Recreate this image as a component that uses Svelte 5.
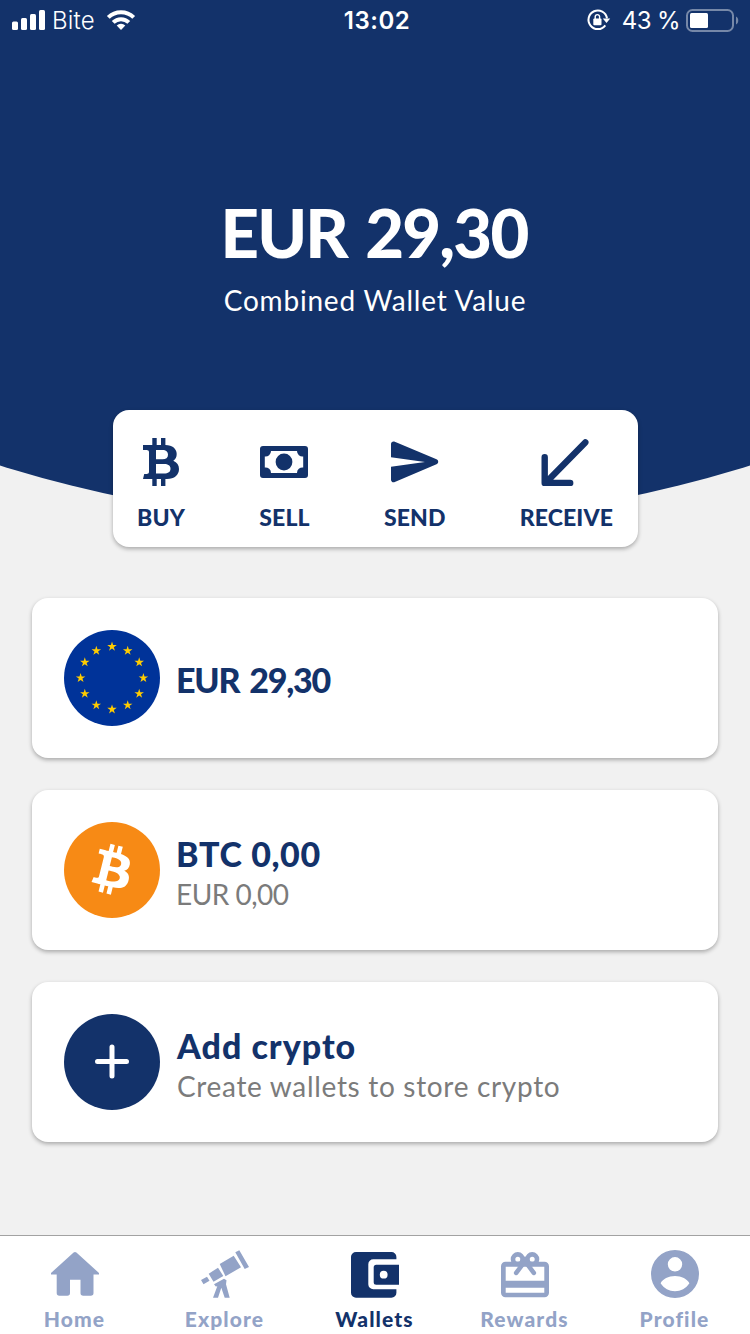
<script>
  const actions = [
    { id: 'buy', label: 'BUY' },
    { id: 'sell', label: 'SELL' },
    { id: 'send', label: 'SEND' },
    { id: 'receive', label: 'RECEIVE' },
  ];

  const wallets = [
    { id: 'eur', title: 'EUR 29,30', subtitle: '' },
    { id: 'btc', title: 'BTC 0,00', subtitle: 'EUR 0,00' },
    { id: 'add', title: 'Add crypto', subtitle: 'Create wallets to store crypto' },
  ];

  const tabs = [
    { id: 'home', label: 'Home' },
    { id: 'explore', label: 'Explore' },
    { id: 'wallets', label: 'Wallets' },
    { id: 'rewards', label: 'Rewards' },
    { id: 'profile', label: 'Profile' },
  ];

  let activeTab = 'wallets';

  const starAngles = Array.from({ length: 12 }, (_, i) => (i * Math.PI) / 6);
</script>

<div class="screen">
  <header class="hero">
    <div class="status-bar">
      <div class="status-left">
        <svg width="34" height="20" viewBox="0 0 34 20" fill="#fff">
          <rect x="0" y="11.5" width="6" height="8.5" rx="1.5" />
          <rect x="9" y="8" width="6" height="12" rx="1.5" />
          <rect x="18" y="4" width="6" height="16" rx="1.5" />
          <rect x="27" y="0" width="6" height="20" rx="1.5" />
        </svg>
        <span class="carrier">Bite</span>
        <svg width="28" height="20" viewBox="0 0 28 20">
          <g fill="none" stroke="#fff" stroke-width="4">
            <path d="M1.3 7.4a18 18 0 0 1 25.4 0" />
            <path d="M6.2 12.4a11 11 0 0 1 15.6 0" />
          </g>
          <path d="M14 20l-4.3-4.4a6.2 6.2 0 0 1 8.6 0z" fill="#fff" />
        </svg>
      </div>
      <span class="time">13:02</span>
      <div class="status-right">
        <svg width="24" height="22" viewBox="0 0 24 22">
          <path d="M18.3 16.3A9.3 9.3 0 1 1 20 9.4" fill="none" stroke="#fff" stroke-width="2" />
          <path d="M15.8 9.6h7.4l-3.7 4.4z" fill="#fff" />
          <rect x="6.3" y="9.6" width="8.2" height="6.6" rx="1" fill="#fff" />
          <path d="M8.2 10V7.8a2.2 2.2 0 0 1 4.4 0V10" fill="none" stroke="#fff" stroke-width="1.4" />
        </svg>
        <span class="percent">43 %</span>
        <svg width="53" height="23" viewBox="0 0 53 23">
          <rect x="1" y="1" width="46" height="21" rx="5.5" fill="none" stroke="#fff" stroke-opacity="0.42" stroke-width="2" />
          <rect x="4" y="4" width="18" height="15" rx="1.5" fill="#fff" />
          <path d="M50 7.5c3 1.3 3 6.7 0 8z" fill="#fff" fill-opacity="0.42" />
        </svg>
      </div>
    </div>
    <h1>EUR 29,30</h1>
    <p class="caption">Combined Wallet Value</p>
  </header>

  <div class="actions">
    {#each actions as action (action.id)}
      <button class="action">
        <svg width="48" height="48" viewBox="0 0 48 48" fill="currentColor">
          {#if action.id === 'buy'}
            <path fill-rule="evenodd" d="M15.3 0h4.4v7H24V0h4.4v7C35.5 7.2 39.7 10.7 39.7 16c0 3.3-1.2 5.3-3.4 6.7 3.7 1.5 5.7 4.5 5.7 8.3 0 6-4.6 10-12 10h-1.6v7H24v-7h-4.3v7h-4.4v-7H6l1.2-5h2.3c1.6 0 2.5-.8 2.5-2.2V14.3c0-1.5-.9-2.3-2.5-2.3H6V7h9.3zM19 12v9.3h6.5c3.5 0 5.5-1.7 5.5-4.6S29 12 25.5 12zM19 26v9.5h8c4.2 0 6.5-1.7 6.5-4.8S31.2 26 27 26z" />
          {:else if action.id === 'sell'}
            <path fill-rule="evenodd" d="M3 8h42a3 3 0 0 1 3 3v26a3 3 0 0 1-3 3H3a3 3 0 0 1-3-3V11a3 3 0 0 1 3-3zM11 13a5.5 5.5 0 0 1-6.2 5.5v11a5.5 5.5 0 0 1 6.2 5.5h26a5.5 5.5 0 0 1 6.2-5.5v-11A5.5 5.5 0 0 1 37 13z" />
            <circle cx="24" cy="24" r="8.4" />
          {:else if action.id === 'send'}
            <path d="M0 6.2C0 4 1.8 2.9 3.8 3.7L45.5 21.3c2.3 1 2.3 4 0 5L3.8 44.1C1.8 44.9 0 43.7 0 41.5V28.7L34 24 0 19.3z" />
          {:else}
            <path d="M43.3 4.4L4 44.5M2.7 19.2v25.7H28.2" fill="none" stroke="currentColor" stroke-width="6.4" stroke-linecap="round" stroke-linejoin="round" />
          {/if}
        </svg>
        <span>{action.label}</span>
      </button>
    {/each}
  </div>

  <main class="card-list">
    {#each wallets as wallet (wallet.id)}
      <div class="card">
        <svg width="96" height="96" viewBox="0 0 96 96">
          {#if wallet.id === 'eur'}
            <circle cx="48" cy="48" r="48" fill="#003399" />
            {#each starAngles as angle}
              <path
                transform="translate({48 + 31.4 * Math.sin(angle)} {48 - 31.4 * Math.cos(angle)})"
                d="M0-5L1.12-1.55H4.76L1.82.59 2.94 4.05 0 1.91-2.94 4.05-1.82.59-4.76-1.55H-1.12z"
                fill="#ffcc00"
              />
            {/each}
          {:else if wallet.id === 'btc'}
            <circle cx="48" cy="48" r="48" fill="#f78a15" />
            <path
              transform="translate(6.7 6.5) scale(2.55)"
              fill="#fff"
              d="M23.189 14.02c.314-2.096-1.283-3.223-3.465-3.975l.708-2.84-1.728-.43-.69 2.765c-.454-.114-.92-.22-1.385-.326l.695-2.783L15.596 6l-.708 2.839c-.376-.086-.746-.17-1.104-.26l.002-.009-2.384-.595-.46 1.846s1.283.294 1.256.312c.7.175.826.638.805 1.006l-.806 3.235c.048.012.11.03.18.057l-.183-.045-1.13 4.532c-.086.212-.303.531-.793.41.018.025-1.256-.313-1.256-.313l-.858 1.978 2.25.561c.418.105.828.215 1.231.318l-.715 2.872 1.727.43.708-2.84c.472.127.93.245 1.378.357l-.706 2.828 1.728.43.715-2.866c2.948.558 5.164.333 6.097-2.333.752-2.146-.037-3.385-1.588-4.192 1.13-.26 1.98-1.003 2.207-2.538zm-3.95 5.538c-.533 2.147-4.148.986-5.32.695l.95-3.805c1.172.293 4.929.872 4.37 3.11zm.535-5.569c-.487 1.953-3.495.96-4.47.717l.86-3.45c.975.243 4.118.696 3.61 2.733z"
            />
          {:else}
            <circle cx="48" cy="48" r="48" fill="#13326a" />
            <path d="M33.5 47.6h29M48 33.1v29" stroke="#fff" stroke-width="5" stroke-linecap="round" />
          {/if}
        </svg>
        <div class="card-text {wallet.id}">
          <h2>{wallet.title}</h2>
          {#if wallet.subtitle}
            <p>{wallet.subtitle}</p>
          {/if}
        </div>
      </div>
    {/each}
  </main>

  <nav class="tab-bar">
    {#each tabs as tab (tab.id)}
      <button class="tab" class:active={tab.id === activeTab} on:click={() => (activeTab = tab.id)}>
        <svg width="48" height="48" viewBox="0 0 48 48" fill="currentColor">
          {#if tab.id === 'home'}
            <path d="M22.6 2.5q1.4-1.2 2.8 0L48 23v1.5h-5.5V43q0 2.7-2.7 2.7h-7.6q-2.7 0-2.7-2.7V29.7H19V43q0 2.7-2.7 2.7H8.4Q5.7 45.7 5.7 43V24.5H0V23z" />
          {:else if tab.id === 'explore'}
            <path d="M0 30l6-3.3 2.5 4-6 3.6zM7.7 23.7l9.3-6L22.3 26l-9.8 5.7zM18.7 14l14-8.3L40 17.3l-15.5 9zM34.3 2.3l4-2L48 17l-4.3 2z" />
            <path d="M13 34.3l10-5.6 2.5 1.6-.5 4 3.7 13.4h-5l-3.4-10-3.3 10h-5l4.3-11.4-1.5.2z" />
          {:else if tab.id === 'wallets'}
            <path d="M45.4 39.3v3.4a5 5 0 0 1-5 5H5a5 5 0 0 1-5-5V7a5 5 0 0 1 5-5h35.4a5 5 0 0 1 5 5v2.3H22.3a5 5 0 0 0-5 5v20a5 5 0 0 0 5 5z" />
            <path fill-rule="evenodd" d="M48 14.7v20H25.2a2.5 2.5 0 0 1-2.5-2.5v-15a2.5 2.5 0 0 1 2.5-2.5zM32.7 20.8a3.9 3.9 0 1 0 0 7.8 3.9 3.9 0 0 0 0-7.8z" />
          {:else if tab.id === 'rewards'}
            <path fill-rule="evenodd" d="M4.5 11.7h39A4.5 4.5 0 0 1 48 16.2v26.6a4.5 4.5 0 0 1-4.5 4.5h-39A4.5 4.5 0 0 1 0 42.8V16.2a4.5 4.5 0 0 1 4.5-4.5zM4.7 16.7v14h38.6v-14zM4.7 37.7v5h38.6v-5z" />
            <g fill="none" stroke="currentColor" stroke-width="4.6">
              <circle cx="16.8" cy="9.2" r="4.8" />
              <circle cx="31.2" cy="9.2" r="4.8" />
              <path d="M15.2 22.8L24 11.2l8.8 11.6" stroke-linecap="round" />
            </g>
            <path d="M20 8.5L24 6.500l4 2 2 6.500H18z" />
          {:else}
            <path fill-rule="evenodd" d="M24 0a24 24 0 1 1 0 48 24 24 0 0 1 0-48zM24 7.1a7.2 7.2 0 1 0 0 14.4 7.2 7.2 0 0 0 0-14.4zM24 26c-6.4 0-12.6 3.2-14.4 7.3C13 38.4 18.2 41.3 24 41.3s11-2.9 14.4-8C36.6 29.2 30.4 26 24 26z" />
          {/if}
        </svg>
        <span>{tab.label}</span>
      </button>
    {/each}
  </nav>
</div>

<style>
  :global(body) {
    background: #f1f1f1;
    margin: 0;
  }

  .screen {
    width: 750px;
    height: 1334px;
    display: flex;
    flex-direction: column;
    overflow: hidden;
    background: #f1f1f1;
    color: #13326a;
    font-family: Lato, 'Liberation Sans', sans-serif;
  }

  h1,
  h2,
  p {
    margin: 0;
    white-space: nowrap;
  }

  svg {
    display: block;
    flex: none;
    overflow: visible;
  }

  button {
    border: none;
    background: none;
    padding: 0;
    color: inherit;
    font: inherit;
    cursor: pointer;
  }

  .hero {
    height: 524px;
    flex: none;
    background: #13326a;
    color: #fff;
    text-align: center;
    clip-path: circle(1250px at 50% -727px);
  }

  .status-bar {
    height: 40px;
    padding: 0 11px 0 12px;
    display: grid;
    grid-template-columns: 1fr auto 1fr;
    align-items: center;
    font-family: Inter, 'Liberation Sans', sans-serif;
    font-size: 24px;
    line-height: 38px;
  }

  .status-bar span {
    padding-top: 2px;
  }

  .status-left,
  .status-right {
    display: flex;
    align-items: center;
  }

  .status-right {
    justify-content: flex-end;
  }

  .carrier {
    margin: 0 12px 0 6px;
    font-weight: 300;
    letter-spacing: 0.2px;
  }

  .status-bar .time {
    padding-left: 3px;
    font-weight: 600;
    letter-spacing: 0.5px;
  }

  .percent {
    margin: 0 6px 0 11px;
    letter-spacing: -0.6px;
  }

  h1 {
    margin-top: 152px;
    font-size: 67px;
    line-height: 80px;
    font-weight: 900;
    letter-spacing: -1.8px;
    word-spacing: 4px;
    text-indent: -2px;
  }

  .caption {
    margin-top: 10px;
    font-size: 28px;
    line-height: 36px;
    letter-spacing: 0.8px;
  }

  .actions {
    position: relative;
    box-sizing: border-box;
    width: 525px;
    height: 137px;
    flex: none;
    margin: -114px auto 0 113px;
    padding: 28px 25px 0 24px;
    display: flex;
    justify-content: space-between;
    align-items: flex-start;
    background: #fff;
    border-radius: 16px;
    box-shadow: 0 2px 4px rgba(0, 0, 0, 0.3);
  }

  .action {
    display: flex;
    flex-direction: column;
    align-items: center;
    gap: 16px;
    font-size: 23px;
    line-height: 30px;
    font-weight: 900;
    letter-spacing: 0.1px;
  }

  .card-list {
    flex: 1;
    display: flex;
    flex-direction: column;
    gap: 32px;
    padding: 51px 32px 0;
  }

  .card {
    box-sizing: border-box;
    height: 160px;
    flex: none;
    padding: 0 32px;
    display: flex;
    align-items: center;
    gap: 16px;
    background: #fff;
    border-radius: 16px;
    box-shadow: 0 2px 4px rgba(0, 0, 0, 0.3);
  }

  .card-text {
    display: flex;
    flex-direction: column;
    padding-top: 8px;
  }

  h2 {
    font-size: 34px;
    line-height: 40px;
    font-weight: 900;
  }

  .card-text p {
    color: #7b7b7b;
    font-size: 28px;
    line-height: 40px;
  }

  .eur {
    padding-top: 3px;
  }

  .eur h2 {
    letter-spacing: -1.2px;
    word-spacing: 3px;
  }

  .btc h2 {
    letter-spacing: 0.6px;
  }

  .btc p {
    letter-spacing: -0.5px;
  }

  .add {
    padding-left: 1px;
  }

  .add h2 {
    letter-spacing: 1px;
  }

  .add p {
    letter-spacing: 0.68px;
  }

  .tab-bar {
    height: 98px;
    flex: none;
    display: flex;
    background: #fff;
    border-top: 1px solid #a2a2a2;
  }

  .tab {
    flex: 1;
    display: flex;
    flex-direction: column;
    align-items: center;
    gap: 7px;
    padding: 14px 1px 0 0;
    color: #93a3c7;
    font-size: 21px;
    line-height: 28px;
    font-weight: 900;
    letter-spacing: 1.1px;
  }

  .tab.active {
    color: #13326a;
  }
</style>
